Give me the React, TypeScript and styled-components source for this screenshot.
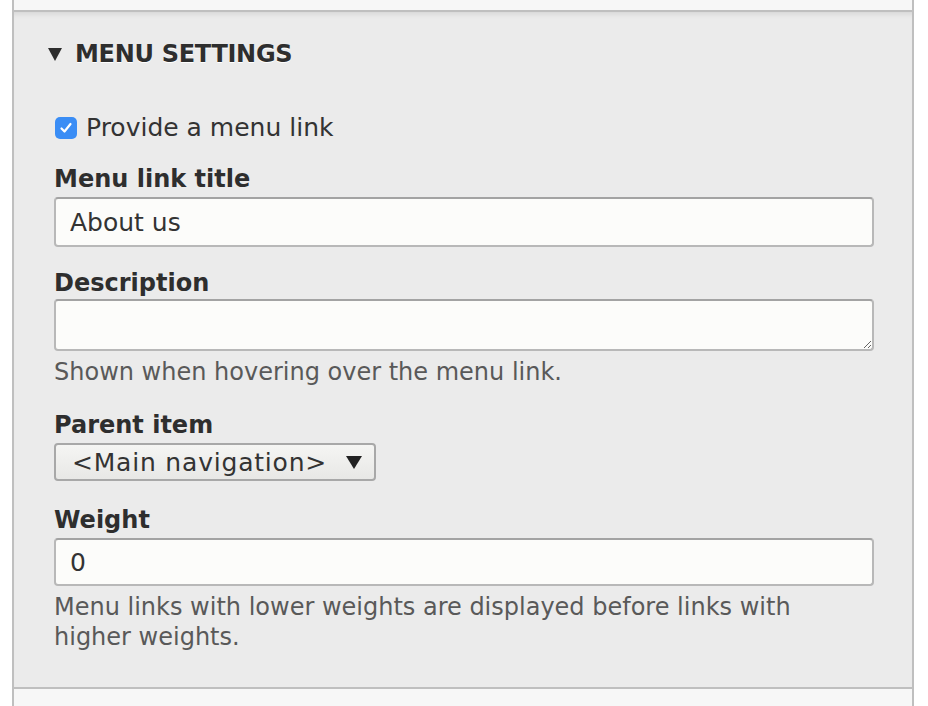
import React from 'react';
import styled, { createGlobalStyle } from 'styled-components';

const GlobalStyle = createGlobalStyle`
  html, body {
    margin: 0;
    padding: 0;
    background: #ffffff;
  }
  body {
    font-family: "DejaVu Sans", "Liberation Sans", sans-serif;
    color: #333333;
  }
`;

const Frame = styled.div`
  width: 902px;
  margin-left: 12px;
  display: flex;
  flex-direction: column;
`;

const PrevSection = styled.div`
  height: 10px;
  background: #f7f7f7;
  border-left: 2px solid #bfbfbf;
  border-right: 2px solid #bfbfbf;
`;

const Panel = styled.details`
  background: #ebebeb;
  border: 2px solid #bfbfbf;
  box-shadow: inset 0 6px 6px -5px rgba(0, 0, 0, 0.12);
  padding: 24px 40px 35px 40px;
`;

const Summary = styled.summary`
  list-style: none;
  display: flex;
  align-items: center;
  gap: 13px;
  margin-left: -6px;
  font-size: 24px;
  font-weight: bold;
  letter-spacing: -0.3px;
  color: #2e2e2e;
  text-shadow: 0 1px 0 #ffffff;
  text-transform: uppercase;
  line-height: 36px;
  cursor: pointer;
  &::-webkit-details-marker {
    display: none;
  }
`;

const Caret = styled.span`
  display: inline-block;
  width: 0;
  height: 0;
  border-left: 7px solid transparent;
  border-right: 7px solid transparent;
  border-top: 13px solid #2e2e2e;
`;

const Body = styled.div`
  margin-top: 41px;
  display: flex;
  flex-direction: column;
`;

const CheckRow = styled.label`
  display: flex;
  align-items: center;
  gap: 9px;
  font-size: 25px;
  line-height: 30px;
  color: #333;
`;

const CheckBox = styled.span`
  width: 22px;
  height: 22px;
  margin-left: 1px;
  border-radius: 5px;
  background: #3a8df5;
  display: flex;
  align-items: center;
  justify-content: center;
`;

const Field = styled.div<{ $gap?: number }>`
  display: flex;
  flex-direction: column;
  margin-top: ${p => p.$gap ?? 0}px;
`;

const Label = styled.label<{ $tight?: boolean }>`
  font-size: 24px;
  font-weight: bold;
  line-height: 32px;
  color: #2e2e2e;
  margin-bottom: ${p => (p.$tight ? 0 : 2)}px;
`;

const TextInput = styled.input<{ $h?: number }>`
  box-sizing: border-box;
  width: 820px;
  height: ${p => p.$h ?? 50}px;
  padding: 0 14px;
  font-family: inherit;
  font-size: 25px;
  color: #333;
  background: #fcfcfa;
  border: 2px solid #b8b8b8;
  border-top-color: #a3a3a3;
  border-radius: 4px;
  outline: none;
`;

const TextArea = styled.textarea`
  box-sizing: border-box;
  width: 820px;
  height: 52px;
  padding: 8px 14px;
  font-family: inherit;
  font-size: 24px;
  background: #fcfcfa;
  border: 2px solid #b8b8b8;
  border-top-color: #a3a3a3;
  border-radius: 4px;
  resize: vertical;
  display: block;
  outline: none;
`;

const Help = styled.div`
  font-size: 24px;
  line-height: 30px;
  color: #595959;
  margin-top: 6px;
  width: 800px;
`;

const Select = styled.div`
  box-sizing: border-box;
  width: 322px;
  height: 38px;
  display: flex;
  align-items: center;
  justify-content: space-between;
  padding: 0 12px 0 16px;
  font-size: 25px;
  letter-spacing: 0.8px;
  color: #333;
  background: linear-gradient(#f5f5f3, #e8e8e6);
  border: 2px solid #a8a8a8;
  border-radius: 4px;
`;

const SelectCaret = styled.span`
  width: 0;
  height: 0;
  border-left: 8px solid transparent;
  border-right: 8px solid transparent;
  border-top: 13px solid #222;
`;

const NextSection = styled.div`
  height: 17px;
  background: #f7f7f7;
  border-left: 2px solid #bfbfbf;
  border-right: 2px solid #bfbfbf;
`;

export default function App() {
  return (
    <>
      <GlobalStyle />
      <Frame>
        <PrevSection />
        <Panel open>
          <Summary>
            <Caret />
            Menu settings
          </Summary>
          <Body>
            <CheckRow>
              <CheckBox>
                <svg width="18" height="18" viewBox="0 0 18 18">
                  <path d="M4.5 9.5 L7.5 12.5 L13.5 5" fill="none" stroke="#fff" strokeWidth="2.2" strokeLinecap="round" strokeLinejoin="round" />
                </svg>
              </CheckBox>
              Provide a menu link
            </CheckRow>
            <Field $gap={20}>
              <Label>Menu link title</Label>
              <TextInput defaultValue="About us" />
            </Field>
            <Field $gap={20}>
              <Label $tight>Description</Label>
              <TextArea rows={1} />
              <Help>Shown when hovering over the menu link.</Help>
            </Field>
            <Field $gap={22}>
              <Label>Parent item</Label>
              <Select>
                &lt;Main navigation&gt;
                <SelectCaret />
              </Select>
            </Field>
            <Field $gap={23}>
              <Label>Weight</Label>
              <TextInput $h={48} defaultValue="0" />
              <Help>Menu links with lower weights are displayed before links with higher weights.</Help>
            </Field>
          </Body>
        </Panel>
        <NextSection />
      </Frame>
    </>
  );
}
